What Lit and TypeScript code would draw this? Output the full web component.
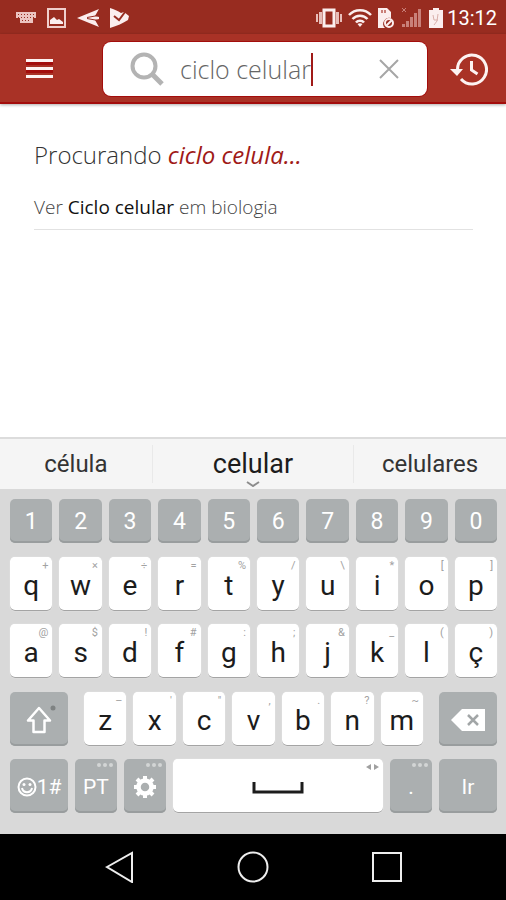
import { LitElement, html, css, svg, nothing, type TemplateResult } from "lit";
import { customElement, property } from "lit/decorators.js";
import { classMap } from "lit/directives/class-map.js";

type KeyDef = { label: string; hint?: string };

const digits = ["1", "2", "3", "4", "5", "6", "7", "8", "9", "0"];

const toKeys = (letters: string, hints: string[]): KeyDef[] =>
  [...letters].map((label, i) => ({ label, hint: hints[i] }));

const topRow = toKeys("qwertyuiop", ["+", "×", "÷", "=", "%", "/", "\\", "*", "[", "]"]);
const homeRow = toKeys("asdfghjklç", ["@", "$", "!", "#", ":", ";", "&", "_", "(", ")"]);
const lowRow = toKeys("zxcvbnm", ["–", "'", "\"", ",", ".", "?", "~"]);

const icon = (cls: string, w: number, h: number, body: TemplateResult) => html`
  <svg class=${cls} width=${w} height=${h} viewBox="0 0 ${w} ${h}" aria-hidden="true">${body}</svg>
`;

@customElement("status-bar")
class StatusBar extends LitElement {
  static styles = css`
    :host {
      display: flex;
      align-items: center;
      justify-content: space-between;
      box-sizing: border-box;
      height: 34px;
      padding: 2px 9px 0 16px;
      background: #982c20;
      color: #fff;
      font: 20px/24px Roboto, sans-serif;
    }
    .left, .right { display: flex; align-items: center; }
    .left { gap: 10px; }
    .right { gap: 6px; }
    .battery { display: flex; align-items: center; gap: 4px; }
    svg { display: block; fill: #fbeeee; }
  `;
  render() {
    return html`
      <div class="left">
        ${icon("", 20, 20, svg`
          <path fill="#ecc4c0" d="M0 4h20v6h-3v5H4v-5H0z"/>
          <path stroke="#982c20" stroke-width="1" stroke-dasharray="1 2" fill="none" d="M2 6.500h17M2 9.500h17M6 12.500h9"/>`)}
        ${icon("", 21, 20, svg`
          <path fill="none" stroke="#f0cfcc" stroke-width="2" d="M2 1h17v18H2z"/>
          <path d="M4 16v-4l4-3 3 3 2-1 4 3v2z"/>`)}
        ${icon("", 23, 20, svg`
          <path d="M0 10 22 1l-4 7 4 1v2l-4 1 4 7z"/>
          <path d="m10 9.500 11-2M10 10.500l11 2" stroke="#982c20" stroke-width="1"/>`)}
        ${icon("", 20, 20, svg`
          <path d="M0 0c4 1 8 3 11 5l3-1 5 4-1 4C13 15 7 18 0 20z"/>
          <path d="m4 8 5 4 6-8" fill="none" stroke="#982c20" stroke-width="2"/>`)}
      </div>
      <div class="right">
        ${icon("", 26, 20, svg`
          <path fill="none" stroke="#fbeeee" stroke-width="3" d="M8 2h10v16H8z"/>
          <path fill="#e8bdb8" d="M3 4h3v12H3zM20 4h3v12h-3zM0 6h2v8H0zM24 6h2v8h-2z"/>`)}
        ${icon("", 24, 20, svg`
          <g fill="none" stroke="#fbeeee" stroke-width="2.500">
            <path d="M1 7c6-6.500 16-6.500 22 0M4.500 11c4-4.500 11-4.500 15 0M8 14.500c2-2.500 6-2.500 8 0"/>
          </g><path d="m12 19-2.500-3c1.500-1 3.500-1 5 0z"/>`)}
        ${icon("", 17, 20, svg`
          <path d="M0 0h9l4 4v6a6 6 0 0 0-6 10H0z"/>
          <path fill="#c98079" d="M3 2h2v3H3zM6 2h2v3H6z"/>
          <circle cx="11" cy="15" r="4" fill="none" stroke="#fbeeee" stroke-width="2"/>
          <path d="m8.500 17.500 5-5" stroke="#fbeeee" stroke-width="2"/>`)}
        ${icon("", 22, 20, svg`
          <path fill="#c98079" d="M1 16h3v3H1zM5 13h3v6H5zM9 9h3v10H9zM13 5h3v14h-3zM17 1h3v18h-3z"/>
          <path d="m1 0 4 4m0-4-4 4" stroke="#c98079"/>`)}
        <div class="battery">
          ${icon("", 14, 20, svg`
            <path d="M0 2h4V0h6v2h4v18H0z"/>
            <path fill="none" stroke="#d9b0ab" stroke-width="1" d="m4 7 1 5h4M9 6l-1 7-3 4"/>`)}
          <span>13:12</span>
        </div>
      </div>
    `;
  }
}

@customElement("search-header")
class SearchHeader extends LitElement {
  static styles = css`
    :host {
      display: flex;
      align-items: center;
      height: 70px;
      box-sizing: border-box;
      padding: 2px 18px 0 26px;
      background: #a93226;
      border-bottom: 2px solid #a30d0c;
      box-shadow: 0 1px 3px #0005;
      position: relative;
    }
    button { border: 0; padding: 0; background: none; display: block; }
    svg { display: block; }
    .search {
      flex: 1;
      display: flex;
      align-items: center;
      box-sizing: border-box;
      height: 54px;
      margin: 0 23px 0 50px;
      padding: 0 28px 0 27px;
      background: #fff;
      border-radius: 8px;
      box-shadow: 0 0 0 1px #a30d0c;
    }
    .glass { margin-right: 16px; }
    input {
      field-sizing: content;
      min-width: 0;
      border: 0;
      padding: 0;
      outline: 0;
      background: none;
      color: #666;
      font: 300 25px/34px "Open Sans", sans-serif;
    }
    .caret { width: 2px; height: 33px; background: #a01a18; }
    .clear { margin-left: auto; }
  `;
  render() {
    return html`
      <button aria-label="Menu">
        ${icon("", 27, 22, svg`
          <path fill="#a30d0c" d="M0 4h27v3H0zM0 12h27v3H0z"/>
          <path fill="#fdf3f2" d="M0 1h27v3H0zM0 9h27v3H0zM0 17h27v3H0z"/>`)}
      </button>
      <label class="search">
        ${icon("glass", 34, 34, svg`
          <circle cx="14" cy="14" r="11.500" fill="none" stroke="#b3b3b3" stroke-width="4"/>
          <path d="m22 22 10 10" stroke="#b3b3b3" stroke-width="5"/>`)}
        <input type="text" aria-label="Pesquisar" value="ciclo celular" />
        <span class="caret"></span>
        <button class="clear" aria-label="Limpar">
          ${icon("", 20, 20, svg`<path d="m1 1 18 18M19 1 1 19" stroke="#a6a6a6" stroke-width="2"/>`)}
        </button>
      </label>
      <button aria-label="Histórico">
        ${icon("", 38, 34, svg`
          <path d="M7.500 18A14.500 14.500 0 1 1 11 27" fill="none" stroke="#fdf3f2" stroke-width="3"/>
          <path d="M0 17h13l-6 7z" fill="#fdf3f2"/>
          <path d="M21.500 9v9l6 4" fill="none" stroke="#fdf3f2" stroke-width="3"/>`)}
      </button>
    `;
  }
}

@customElement("key-cap")
class KeyCap extends LitElement {
  @property() label = "";
  @property() hint = "";
  @property() name = "";
  @property({ type: Boolean }) dark = false;
  static styles = css`
    :host { display: block; flex: 1 1 0; min-width: 0; }
    .key {
      position: relative;
      display: flex;
      align-items: center;
      justify-content: center;
      width: 100%;
      height: 100%;
      border: 0;
      padding: 4px 0 0;
      border-radius: 5px;
      background: #fff;
      color: #1c1c1c;
      box-shadow: inset 0 -1px #a4a4a4, 0 0 1px #fff;
      font: 28px/32px Roboto, sans-serif;
    }
    .dark {
      background: #abafb0;
      color: #fff;
      padding: 2px 0 0;
      box-shadow: inset 0 -2px #999d9e;
      font-size: 23px;
    }
    .hint {
      position: absolute;
      top: 3px;
      right: 4px;
      color: #a2a2a2;
      font: 11px/12px Roboto, sans-serif;
    }
  `;
  render() {
    return html`
      <button class=${classMap({ key: true, dark: this.dark })} aria-label=${this.name || this.label}>
        <slot>${this.label}</slot>
        ${this.hint ? html`<span class="hint">${this.hint}</span>` : nothing}
        <slot name="corner"></slot>
      </button>
    `;
  }
}

@customElement("soft-keyboard")
class SoftKeyboard extends LitElement {
  static styles = css`
    :host { display: block; background: #d9d9d9; }
    .suggestions {
      display: grid;
      grid-template-columns: 3fr 4fr 3fr;
      height: 52px;
      box-sizing: border-box;
      background: #f5f5f5;
      border-top: 2px solid #dcdcdc;
      align-items: center;
    }
    .word {
      position: relative;
      border: 0;
      padding: 0;
      height: 38px;
      background: none;
      color: #333;
      font: 24px/38px Roboto, sans-serif;
    }
    .main {
      color: #1c1c1c;
      font-size: 27px;
      border: solid #e9e9e9;
      border-width: 0 1px;
    }
    .more { position: absolute; left: 50%; bottom: -4px; margin-left: -7px; }
    .keys {
      display: flex;
      flex-direction: column;
      justify-content: space-between;
      box-sizing: border-box;
      height: 345px;
      padding: 10px 9px 21px 10px;
    }
    .row { display: flex; gap: 7px; height: 54px; }
    .digits { height: 44px; }
    .letters { display: flex; flex: 1; gap: 7px; margin: 0 9px; }
    .wide { flex: 0 0 58px; }
    .small { flex: 0 0 42px; }
    .text { font-size: 21px; }
    svg { display: block; }
    .corner { position: absolute; top: 4px; right: 4px; }
    .shift-dot { position: absolute; top: 13px; right: 12px; }
  `;
  private keys(row: KeyDef[]) {
    return row.map((k) => html`<key-cap label=${k.label} hint=${k.hint ?? ""}></key-cap>`);
  }
  private dots() {
    return html`<span slot="corner">${icon("corner", 16, 4, svg`
      <g fill="#d3d5d5"><circle cx="2" cy="2" r="2"/><circle cx="8" cy="2" r="2"/><circle cx="14" cy="2" r="2"/></g>`)}</span>`;
  }
  render() {
    return html`
      <div class="suggestions">
        <button class="word">célula</button>
        <button class="word main">celular
          ${icon("more", 14, 6, svg`<path d="m1 1 6 4 6-4" fill="none" stroke="#8c8c8c" stroke-width="2"/>`)}
        </button>
        <button class="word">celulares</button>
      </div>
      <div class="keys">
        <div class="row digits">${digits.map((d) => html`<key-cap dark label=${d}></key-cap>`)}</div>
        <div class="row">${this.keys(topRow)}</div>
        <div class="row">${this.keys(homeRow)}</div>
        <div class="row">
          <key-cap class="wide" dark name="Shift">
            ${icon("", 26, 28, svg`<path d="M13 2 2 14.500h5.500V26h11V14.500H24z" fill="none" stroke="#fff" stroke-width="2.500" stroke-linejoin="round"/>`)}
            <span slot="corner">${icon("shift-dot", 6, 6, svg`<circle cx="3" cy="3" r="2.500" fill="#7e8282"/>`)}</span>
          </key-cap>
          <div class="letters">${this.keys(lowRow)}</div>
          <key-cap class="wide" dark name="Apagar">
            ${icon("", 34, 22, svg`
              <path d="M0 11 11 0h23v22H11z" fill="#fff"/>
              <path d="m17 6 10 10m0-10L17 16" stroke="#a2a6a7" stroke-width="2.500"/>`)}
          </key-cap>
        </div>
        <div class="row">
          <key-cap class="wide" dark name="Emojis e símbolos">
            ${icon("", 20, 20, svg`
              <circle cx="10" cy="10" r="8.500" fill="none" stroke="#fff" stroke-width="2"/>
              <path d="M5 11c1 5.500 9 5.500 10 0" fill="none" stroke="#fff" stroke-width="2"/><circle cx="7" cy="7.500" r="1.500" fill="#fff"/><circle cx="13" cy="7.500" r="1.500" fill="#fff"/>`)}
            <span class="text">1#</span>
          </key-cap>
          <key-cap class="small" dark name="Idioma"><span class="text">PT</span>${this.dots()}</key-cap>
          <key-cap class="small" dark name="Configurações">
            ${icon("", 24, 24, svg`
              <circle cx="12" cy="12" r="6.500" fill="none" stroke="#fff" stroke-width="4.500"/>
              <g stroke="#fff" stroke-width="4"><path d="M12 1v4M12 19v4M1 12h4M19 12h4M4 4l3 3M17 17l3 3M4 20l3-3M17 7l3-3"/></g>`)}
            ${this.dots()}
          </key-cap>
          <key-cap name="Espaço">
            ${icon("", 52, 12, svg`<path d="M2 0v10h48V0" fill="none" stroke="#1c1c1c" stroke-width="3"/>`)}
            <span slot="corner">${icon("corner", 13, 8, svg`<path d="M0 4 5 1v6zM13 4 8 1v6z" fill="#a0a0a0"/>`)}</span>
          </key-cap>
          <key-cap class="small" dark name="Ponto"><span class="text">.</span>${this.dots()}</key-cap>
          <key-cap class="wide" dark name="Ir"><span class="text">Ir</span></key-cap>
        </div>
      </div>
    `;
  }
}

@customElement("nav-bar")
class NavBar extends LitElement {
  static styles = css`
    :host {
      display: flex;
      align-items: center;
      justify-content: center;
      gap: 102px;
      height: 66px;
      background: #000;
    }
    button { border: 0; padding: 0; background: none; }
    svg { display: block; fill: none; stroke: #eee; stroke-width: 2; }
  `;
  render() {
    return html`
      <button aria-label="Voltar">${icon("", 32, 32, svg`<path d="M4 16 29 2v29z"/>`)}</button>
      <button aria-label="Início">${icon("", 32, 32, svg`<circle cx="16" cy="16" r="14.500"/>`)}</button>
      <button aria-label="Recentes">${icon("", 32, 32, svg`<path d="M2 2h28v28H2z"/>`)}</button>
    `;
  }
}

@customElement("app-root")
class AppRoot extends LitElement {
  static styles = css`
    :host {
      display: flex;
      flex-direction: column;
      min-height: 100vh;
      background: #fff;
      font-family: "Open Sans", sans-serif;
      font-weight: 300;
    }
    main { flex: 1; padding: 34px 33px 0 34px; }
    h1 { margin: 0; font-size: 24px; line-height: 34px; font-weight: 300; color: #333; }
    em { color: #a01a18; font-weight: 400; }
    .result {
      display: block;
      margin-top: 20px;
      padding-bottom: 7px;
      border-bottom: 1px solid #e2e2e2;
      color: #444;
      font-size: 19px;
      line-height: 30px;
      text-decoration: none;
    }
    strong { color: #111; font-weight: 400; }
  `;
  render() {
    return html`
      <status-bar></status-bar>
      <search-header></search-header>
      <main>
        <h1>Procurando <em>ciclo celula...</em></h1>
        <a class="result" href="#biologia">Ver <strong>Ciclo celular</strong> em biologia</a>
      </main>
      <soft-keyboard></soft-keyboard>
      <nav-bar></nav-bar>
    `;
  }
}
